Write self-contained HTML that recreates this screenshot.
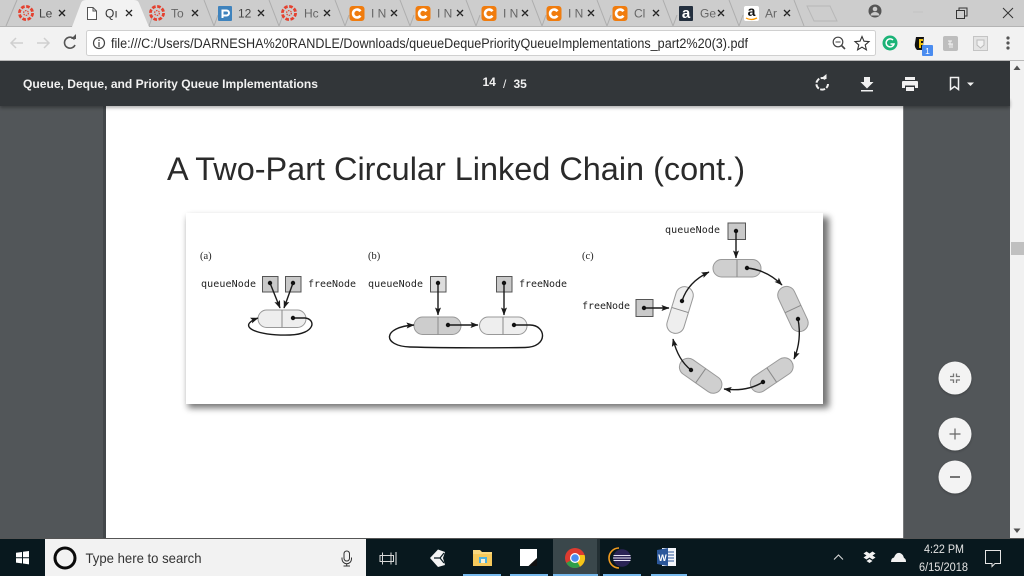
<!DOCTYPE html>
<html><head><meta charset="utf-8"><style>
html,body{margin:0;padding:0;width:1024px;height:576px;overflow:hidden;background:#525659}
svg{display:block}
.s{font-family:"Liberation Sans",sans-serif}
.m{font-family:"DejaVu Sans Mono","Liberation Mono",monospace;font-size:10px;fill:#222}
.r{font-family:"Liberation Serif",serif;font-size:10.5px;fill:#222}
.t{font-family:"Liberation Sans",sans-serif;font-size:12px;fill:#666}
.x{stroke:#222;stroke-width:1.300;fill:none}
.dv{stroke:#8a8a8a;stroke-width:1;fill:none}
.ar{stroke:#1a1a1a;stroke-width:1.400;fill:none}
.bx{fill:#c9c9c9;stroke:#555;stroke-width:1}
</style></head><body>
<svg width="1024" height="576" viewBox="0 0 1024 576" xmlns="http://www.w3.org/2000/svg">
<defs>
<filter id="sh" x="-5%" y="-5%" width="112%" height="115%"><feGaussianBlur stdDeviation="3.500"/></filter>
<filter id="bs" x="-30%" y="-30%" width="160%" height="170%"><feGaussianBlur stdDeviation="1.200"/></filter>
<filter id="tb" x="-2%" y="-20%" width="104%" height="160%"><feGaussianBlur stdDeviation="1.500"/></filter>
<g id="cv"><circle r="6.600" fill="none" stroke="#e4412f" stroke-width="2.800" stroke-dasharray="3.600 1.580"/><circle r="2.400" fill="none" stroke="#e4412f" stroke-width="1.200" stroke-dasharray="1.500 1"/></g>
<g id="cc"><rect x="-7.500" y="-7.500" width="15" height="15" rx="3" fill="#f07c0e"/><path d="M3.400-2.200A4 4 0 1 0 3.400 2.200" fill="none" stroke="#fff" stroke-width="2.600"/></g>
<marker id="h" markerWidth="9" markerHeight="7" refX="7.500" refY="3" orient="auto" markerUnits="userSpaceOnUse"><path d="M0 0L8 3L0 6L1.600 3Z" fill="#1a1a1a"/></marker>
</defs>

<!-- tab strip -->
<rect width="1024" height="27" fill="#cdcdcd"/>
<g fill="none" stroke="#adadad" stroke-width="1">
<path d="M6 26L17 0"/>
<path d="M204 0L214 26M214 26L218 15"/><path d="M269 0L279 26M279 26L283 15"/><path d="M335 0L345 26M345 26L349 15"/><path d="M400 0L410 26M410 26L414 15"/><path d="M466 0L476 26M476 26L480 15"/><path d="M532 0L542 26M542 26L546 15"/><path d="M597 0L607 26M607 26L611 15"/><path d="M663 0L673 26M673 26L677 15"/><path d="M729 0L739 26M739 26L743 15"/><path d="M794 0L804 26"/>
<path d="M807 6H830L837 21H814Z" stroke="#b8b8b8"/>
<path d="M149 26L153 15"/>
</g>
<path d="M72 27L81 3Q82 0 86 0H134Q138 0 139 3L149 27Z" fill="#f2f2f2"/>
<path d="M87.500 7.500H93L96.500 11V19.500H87.500Z" fill="#fff" stroke="#555" stroke-width="1"/><path d="M93 7.500V11H96.500" fill="none" stroke="#555"/>
<use href="#cv" x="26" y="13"/><use href="#cv" x="157" y="13"/><use href="#cv" x="289" y="13"/>
<rect x="218" y="6" width="14" height="15" rx="1" fill="#3f83bd"/><path d="M222.500 18V10.500H226.500A2.500 2.500 0 0 1 226.500 15.500H223" fill="none" stroke="#fff" stroke-width="2"/>
<use href="#cc" x="357" y="13.500"/><use href="#cc" x="423" y="13.500"/><use href="#cc" x="489" y="13.500"/><use href="#cc" x="554" y="13.500"/><use href="#cc" x="620" y="13.500"/>
<rect x="679" y="6" width="14" height="15" rx="1" fill="#232f3e"/><text x="686" y="18" text-anchor="middle" class="s" font-size="15" font-weight="bold" fill="#fff">a</text>
<rect x="744" y="6" width="15" height="15" rx="2" fill="#fff"/><text x="751.500" y="16" text-anchor="middle" class="s" font-size="14" font-weight="bold" fill="#111">a</text><path d="M746 18Q751 21 757 18" fill="none" stroke="#f90" stroke-width="1.300"/>
<g>
<text x="39" y="17.500" class="t" style="fill:#444">Le</text><text x="105" y="17.500" class="t" style="fill:#333">Qı</text><text x="171" y="17.500" class="t">To</text><text x="238" y="17.500" class="t" style="fill:#444">12</text><text x="304" y="17.500" class="t">Hc</text>
<text x="371" y="17.500" class="t">I N</text><text x="437" y="17.500" class="t">I N</text><text x="503" y="17.500" class="t">I N</text><text x="568" y="17.500" class="t">I N</text><text x="634" y="17.500" class="t">Cl</text><text x="700" y="17.500" class="t">Ge</text><text x="765" y="17.500" class="t">Ar</text>
</g>
<path class="x" d="M59 10l6 6m0-6l-6 6M126 10l6 6m0-6l-6 6M192 10l6 6m0-6l-6 6M258 10l6 6m0-6l-6 6M324 10l6 6m0-6l-6 6M391 10l6 6m0-6l-6 6M457 10l6 6m0-6l-6 6M522 10l6 6m0-6l-6 6M588 10l6 6m0-6l-6 6M653 10l6 6m0-6l-6 6M718 10l6 6m0-6l-6 6M784 10l6 6m0-6l-6 6"/>
<!-- window controls -->
<circle cx="875" cy="11" r="6.500" fill="#555"/><circle cx="875" cy="9" r="2.300" fill="#ccc"/><path d="M870.500 15.500a4.500 3.500 0 0 1 9 0" fill="#ccc"/>
<path d="M913 12H923" stroke="#c2c2c2"/>
<path d="M956.500 10.500H964.500V18.500H956.500ZM959 10.500V8H967V16H964.500" fill="none" stroke="#333"/>
<path d="M1003 8L1013 18M1013 8L1003 18" stroke="#333" fill="none"/>

<!-- toolbar -->
<rect y="27" width="1024" height="33" fill="#f2f2f2"/>
<rect y="26" x="0" width="72" height="1" fill="#b4b4b4"/><rect y="26" x="149" width="875" height="1" fill="#b4b4b4"/>
<rect x="86.500" y="30.500" width="789" height="25" rx="2" fill="#fff" stroke="#d0d0d0"/>
<path d="M11 43H23M16 38L11 43L16 48" fill="none" stroke="#cfcfcf" stroke-width="1.500"/>
<path d="M37 43H49M44 38L49 43L44 48" fill="none" stroke="#cfcfcf" stroke-width="1.500"/>
<path d="M74.500 39.500A5.500 5.500 0 1 0 75 45" fill="none" stroke="#555" stroke-width="1.600"/><path d="M71 39H76V34Z" fill="#555"/>
<circle cx="99" cy="43" r="5.500" fill="none" stroke="#444" stroke-width="1.200"/><path d="M99 42V47M99 39.500V41" stroke="#444" stroke-width="1.200"/>
<text x="111" y="48" class="s" font-size="13.500" fill="#2a2a2a" textLength="637" lengthAdjust="spacingAndGlyphs">file:///C:/Users/DARNESHA%20RANDLE/Downloads/queueDequePriorityQueueImplementations_part2%20(3).pdf</text>
<circle cx="838" cy="42" r="4.800" fill="none" stroke="#444" stroke-width="1.200"/><path d="M841.500 45.500L845 49" stroke="#444" stroke-width="1.600"/><path d="M835.500 42H840.500" stroke="#444"/>
<path d="M862 36.500L864 41.200L869 41.600L865.200 44.900L866.400 49.800L862 47.200L857.600 49.800L858.800 44.900L855 41.600L860 41.200Z" fill="none" stroke="#333" stroke-width="1.100"/>
<circle cx="890" cy="43" r="7.500" fill="#1bb377"/><path d="M893 40A4 4 0 1 0 894 44H890.500" fill="none" stroke="#fff" stroke-width="1.500"/>
<path d="M916 37H924L922.500 50H917Q914 47 915 43Z" fill="#111"/><path d="M919 39H923V41H921V43H923V45H921V48H919Z" fill="#f1c40f"/>
<rect x="922" y="45" width="11" height="11" rx="1" fill="#4a8cf0"/><text x="927.500" y="54" text-anchor="middle" class="s" font-size="8.500" fill="#fff">1</text>
<rect x="943" y="36" width="15" height="15" rx="2" fill="#bdbdbd"/><path d="M948 41h4m-2 0v7m-2-4h5m-1 0v4" fill="none" stroke="#f2f2f2"/>
<rect x="973.500" y="36.500" width="14" height="14" fill="#e4e4e4" stroke="#c4c4c4"/><path d="M977 40h7v5l-3.500 3l-3.500-3Z" fill="#f2f2f2" stroke="#bbb"/>
<circle cx="1008" cy="38" r="1.600" fill="#555"/><circle cx="1008" cy="43" r="1.600" fill="#555"/><circle cx="1008" cy="48" r="1.600" fill="#555"/>
<rect y="60" width="1024" height="1" fill="#b8b8b8"/>

<!-- viewer -->
<rect y="61" width="1024" height="478" fill="#525659"/>
<rect x="1010" y="61" width="14" height="478" fill="#f1f1f1"/>
<rect x="1011" y="242" width="13" height="13" fill="#c0c0c0"/>
<path d="M1017 65.500L1020.500 70H1013.500Z" fill="#505050"/><path d="M1017 533L1020.500 528.500H1013.500Z" fill="#505050"/>
<rect x="106" y="100" width="797" height="439" fill="#fff"/>
<rect x="103" y="106" width="3" height="433" fill="#43474a"/><rect x="903" y="106" width="1" height="433" fill="#77797b"/>
<rect x="0" y="100" width="1010" height="8" fill="#000" opacity=".3" filter="url(#tb)"/>
<rect y="61" width="1010" height="45" fill="#323639"/>
<text x="23" y="88" class="s" font-size="12" font-weight="bold" fill="#f1f1f1" textLength="295" lengthAdjust="spacingAndGlyphs">Queue, Deque, and Priority Queue Implementations</text>
<text x="482.500" y="86" class="s" font-size="12" font-weight="bold" fill="#f1f1f1">14</text>
<text x="503" y="88" class="s" font-size="12" fill="#f1f1f1">/</text>
<text x="513.500" y="88" class="s" font-size="12" font-weight="bold" fill="#f1f1f1">35</text>
<path d="M825.500 79A5.800 5.800 0 1 0 828 84" fill="none" stroke="#f1f1f1" stroke-width="2" stroke-dasharray="5 1.500"/><path d="M820.500 79H826.500V74Z" fill="#f1f1f1"/>
<path d="M864 77H870V82H873.500L867 88.500L860.500 82H864Z M861 90H873V91.500H861Z" fill="#f1f1f1"/>
<path d="M905 77H915V80H905Z M903 81H917Q918 81 918 82V88H915V85.500H905V88H902V82Q902 81 903 81Z M906 87H914V91H906Z" fill="#f1f1f1"/>
<path d="M950.500 77.500H958.500V89.500L954.500 86.500L950.500 89.500Z" fill="none" stroke="#f1f1f1" stroke-width="1.500"/>
<path d="M967 82.500H974L970.500 86Z" fill="#f1f1f1"/>

<!-- title -->
<text x="167" y="180" class="s" font-size="32" fill="#2a2a2a" textLength="578" lengthAdjust="spacingAndGlyphs">A Two-Part Circular Linked Chain (cont.)</text>

<!-- figure -->
<rect x="188" y="217" width="641" height="191" fill="#000" opacity=".55" filter="url(#sh)"/>
<rect x="186" y="213" width="637" height="191" fill="#fff"/>
<text x="200" y="259" class="r">(a)</text><text x="368" y="259" class="r">(b)</text><text x="582" y="259" class="r">(c)</text>
<text x="201" y="287" class="m" textLength="55">queueNode</text><text x="308" y="287" class="m" textLength="48">freeNode</text>
<text x="368" y="287" class="m" textLength="55">queueNode</text><text x="519" y="287" class="m" textLength="48">freeNode</text>
<text x="665" y="233" class="m" textLength="55">queueNode</text><text x="582" y="309" class="m" textLength="48">freeNode</text>

<!-- a -->
<rect x="262.500" y="276.500" width="15.500" height="15.500" class="bx"/><rect x="285.500" y="276.500" width="15.500" height="15.500" class="bx"/>
<rect x="258" y="310" width="48" height="17.500" rx="8.700" fill="#eee" stroke="#999"/><path class="dv" d="M282 310V327.500"/>
<path class="ar" d="M270 283L280 308" marker-end="url(#h)"/><path class="ar" d="M293 283L284 308" marker-end="url(#h)"/>
<path class="ar" d="M293 318H305C316 319 316 334 290 335C255 336 236 326 258 318" marker-end="url(#h)"/>
<circle cx="270" cy="283" r="2.200" fill="#111"/><circle cx="293" cy="283" r="2.200" fill="#111"/><circle cx="293" cy="318" r="2.200" fill="#111"/>

<!-- b -->
<rect x="430.500" y="276.500" width="15.500" height="15.500" fill="#ddd" stroke="#555"/><rect x="496.500" y="276.500" width="15.500" height="15.500" class="bx"/>
<rect x="414" y="317" width="47" height="17.500" rx="8.700" fill="#cdcdcd" stroke="#999"/><path class="dv" d="M438 317V334.500"/>
<rect x="479.500" y="317" width="47.500" height="17.500" rx="8.700" fill="#eee" stroke="#999"/><path class="dv" d="M503 317V334.500"/>
<path class="ar" d="M438 283V315" marker-end="url(#h)"/><path class="ar" d="M504 283V315" marker-end="url(#h)"/>
<path class="ar" d="M448 325H478" marker-end="url(#h)"/>
<path class="ar" d="M514 325H530C546 325 549 347 525 347.500C480 348 445 348 410 347C382 346 382 327 414 325" marker-end="url(#h)"/>
<circle cx="438" cy="283" r="2.200" fill="#111"/><circle cx="504" cy="283" r="2.200" fill="#111"/><circle cx="448" cy="325" r="2.200" fill="#111"/><circle cx="514" cy="325" r="2.200" fill="#111"/>

<!-- c -->
<rect x="728" y="223" width="17.500" height="16.500" class="bx"/><rect x="636" y="299.500" width="17" height="17" class="bx"/>
<g stroke="#999" fill="#cfcfcf">
<rect x="713" y="259.500" width="48" height="17.500" rx="8.700"/><path class="dv" d="M737 259.500V277"/>
<g transform="translate(793,309) rotate(65)"><rect x="-24" y="-8.700" width="48" height="17.500" rx="8.700"/><path class="dv" d="M0-8.700V8.700"/></g>
<g transform="translate(771.700,375) rotate(-34)"><rect x="-24" y="-8.700" width="48" height="17.500" rx="8.700"/><path class="dv" d="M0-8.700V8.700"/></g>
<g transform="translate(700.700,375.700) rotate(35)"><rect x="-24" y="-8.700" width="48" height="17.500" rx="8.700"/><path class="dv" d="M0-8.700V8.700"/></g>
<g transform="translate(680,310) rotate(-73)"><rect x="-24" y="-8.700" width="48" height="17.500" rx="8.700" fill="#eee"/><path class="dv" d="M0-8.700V8.700"/></g>
</g>
<path class="ar" d="M736 231V258" marker-end="url(#h)"/>
<path class="ar" d="M747 268Q767 270 782 285" marker-end="url(#h)"/>
<path class="ar" d="M798 319Q802 340 794 359" marker-end="url(#h)"/>
<path class="ar" d="M763 382Q747 392 724 389" marker-end="url(#h)"/>
<path class="ar" d="M691 370Q678 360 673 339" marker-end="url(#h)"/>
<path class="ar" d="M682 301Q688 282 709 272" marker-end="url(#h)"/>
<path class="ar" d="M644 308H669" marker-end="url(#h)"/>
<g fill="#111"><circle cx="736" cy="231" r="2.200"/><circle cx="747" cy="268" r="2.200"/><circle cx="798" cy="319" r="2.200"/><circle cx="763" cy="382" r="2.200"/><circle cx="691" cy="370" r="2.200"/><circle cx="682" cy="301" r="2.200"/><circle cx="644" cy="308" r="2.200"/></g>

<!-- floating buttons -->
<g filter="url(#bs)" fill="#000" opacity=".25"><circle cx="955" cy="379" r="16.500"/><circle cx="955" cy="435" r="16.500"/><circle cx="955" cy="478" r="16.500"/></g>
<circle cx="955" cy="378" r="16.500" fill="#f3f3f3"/><circle cx="955" cy="434" r="16.500" fill="#f3f3f3"/><circle cx="955" cy="477" r="16.500" fill="#f3f3f3"/>
<path d="M953.500 373.500V376.500H950M956.500 373.500V376.500H960M953.500 383V380H950M956.500 383V380H960" fill="none" stroke="#777" stroke-width="1.300"/>
<path d="M949.500 434H960.500M955 428.500V439.500" stroke="#666" stroke-width="1.200"/>
<path d="M950 477H960" stroke="#666" stroke-width="1.800"/>

<!-- taskbar -->
<rect y="538" width="1024" height="1" fill="#555"/>
<rect y="539" width="1024" height="37" fill="#08181e"/>
<path d="M16 552.800L22 552V557.200H16ZM23 551.800L29 551V557.200H23ZM16 558.200H22V563.400L16 562.600ZM23 558.200H29V564.400L23 563.500Z" fill="#fff"/>
<rect x="45" y="539" width="321" height="37" fill="#f2f2f2"/>
<circle cx="65" cy="558" r="10" fill="none" stroke="#0a0a0a" stroke-width="3"/>
<text x="85.500" y="563" class="s" font-size="14" fill="#333" textLength="116" lengthAdjust="spacingAndGlyphs">Type here to search</text>
<rect x="344" y="551" width="5.500" height="10" rx="2.700" fill="none" stroke="#333"/><path d="M342 557.500V559A4.700 4.700 0 0 0 351.500 559V557.500M346.700 564V566M343.500 566H350" fill="none" stroke="#333"/>
<path d="M382.500 552.500V564.500M391 552.500V564.500M380 555.500H393.500V561.500H380Z" fill="none" stroke="#d8d8d8"/><path d="M396 552V565" stroke="#eee"/>
<path d="M430 558L438 549.500L445 552L443 558L445 565L438 567Z" fill="#f4f4f4"/><path d="M434 558H440L444 553M440 558L444 563" stroke="#08181e" stroke-width="1.200" fill="none"/>
<path d="M473 550H480L482 552H492V566H473Z" fill="#f9d77e"/><rect x="473" y="554" width="19" height="12" fill="#f6c95b"/><path d="M479 557H487V563H479Z" fill="#4db1e0"/><path d="M481 559H485V563H481Z" fill="#f8f1d8"/>
<path d="M520 549H537V561.500L531.500 566H520Z" fill="#fff"/><path d="M528.500 566L537 558V566Z" fill="#111"/>
<rect x="553" y="539" width="44" height="37" fill="#3a474b"/>
<rect x="597" y="539" width="3" height="37" fill="#232f33"/>
<circle cx="575" cy="558" r="10" fill="#dd3b30"/>
<path d="M575 558L566.300 563A10 10 0 0 0 575 568C577 568 579 567.400 580.500 566.300Z" fill="#2f9e4a"/>
<path d="M575 558L580 566.700A10 10 0 0 0 584.600 555H575Z" fill="#f5c518"/>
<circle cx="575" cy="558" r="5" fill="#fff"/><circle cx="575" cy="558" r="3.800" fill="#4a8cf0"/>
<path d="M619 548A10 10 0 0 0 619 568" fill="none" stroke="#f39c1f" stroke-width="1.600"/>
<circle cx="622" cy="558" r="8.800" fill="#2b2456"/><path d="M613.500 555.500H630.500M613 558H631M613.500 560.500H630.500" stroke="#e8e4f4" stroke-width="1"/>
<rect x="662" y="548" width="14" height="18" fill="#f4f6fb"/><path d="M668 552H674M668 555H674M668 558H674M668 561H674" stroke="#2b579a"/>
<path d="M657 550L668 548V566L657 564Z" fill="#2b579a"/><text x="662.500" y="561" text-anchor="middle" class="s" font-size="9" font-weight="bold" fill="#fff">W</text>
<g fill="#76b9ed"><rect x="463" y="574" width="38" height="2"/><rect x="510" y="574" width="38" height="2"/><rect x="553" y="574" width="45" height="2"/><rect x="603" y="574" width="38" height="2"/><rect x="651" y="574" width="36" height="2"/></g>
<path d="M834 559.500L838.500 555L843 559.500" fill="none" stroke="#ddd" stroke-width="1"/>
<path d="M863.500 553.500L866.500 555.500L863.500 557.500L866.500 559.500L869.500 557.500L872.500 559.500L875.500 557.500L872.500 555.500L875.500 553.500L872.500 551.500L869.500 553.500L866.500 551.500ZM866.500 561L869.500 563L872.500 561L869.500 559Z" fill="#f2f2f2"/>
<path d="M891 562Q891 558 894 557.500Q896 552 900 553Q903 554 904 558Q906 558.500 906 562Z" fill="#f2f2f2"/>
<text x="944" y="553" text-anchor="middle" class="s" font-size="11.500" fill="#e4e4e4" textLength="40" lengthAdjust="spacingAndGlyphs">4:22 PM</text>
<text x="943.500" y="571" text-anchor="middle" class="s" font-size="11.500" fill="#e4e4e4" textLength="49" lengthAdjust="spacingAndGlyphs">6/15/2018</text>
<path d="M985.500 550.500H1000.500V563.500H995L992 566.500V563.500H985.500Z" fill="none" stroke="#e4e4e4"/>
</svg>
</body></html>
